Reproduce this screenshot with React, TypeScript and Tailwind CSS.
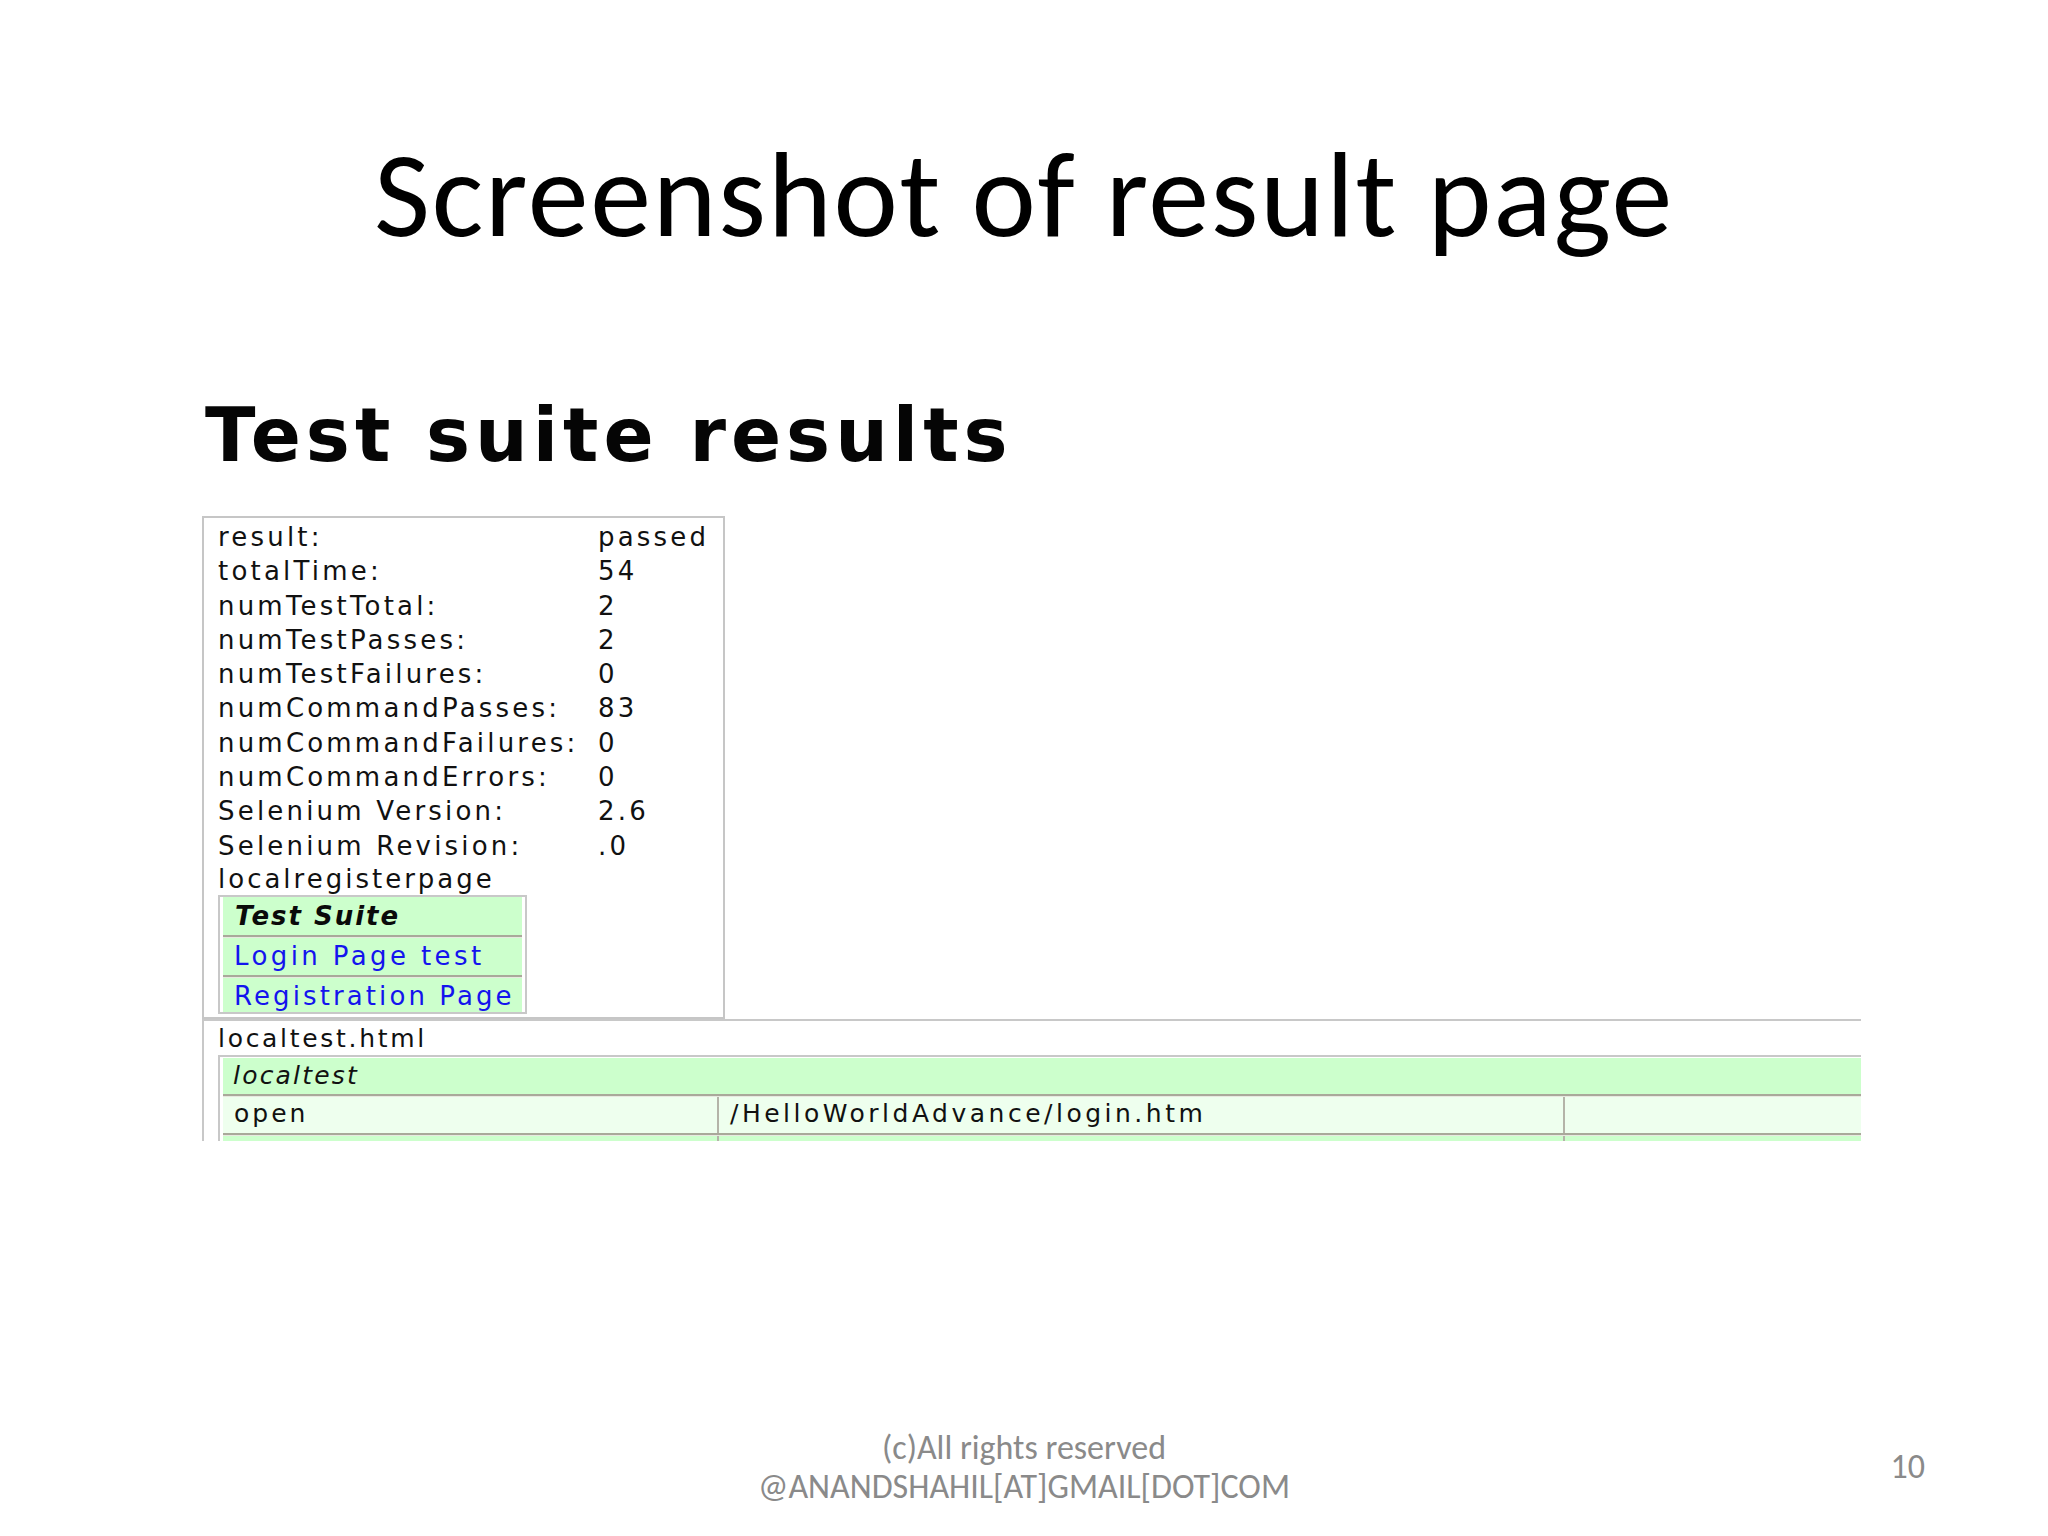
import React from "react";

const rows: [string, string][] = [
  ["result:", "passed"],
  ["totalTime:", "54"],
  ["numTestTotal:", "2"],
  ["numTestPasses:", "2"],
  ["numTestFailures:", "0"],
  ["numCommandPasses:", "83"],
  ["numCommandFailures:", "0"],
  ["numCommandErrors:", "0"],
  ["Selenium Version:", "2.6"],
  ["Selenium Revision:", ".0"],
];

function Sep() {
  return (
    <div className="flex flex-col">
      <div className="h-[2px] bg-[#a9a99a]" />
      <div className="h-[1px] bg-[#e8e8e0]" />
    </div>
  );
}

export default function App() {
  return (
    <div className="w-[2048px] h-[1536px] bg-white overflow-hidden flex flex-col text-black">
      <h1 className="mt-[120px] text-center text-[122px] leading-[150px] font-['Carlito','Lato',sans-serif] font-normal tracking-[1.7px]">
        Screenshot of result page
      </h1>

      <div className="mt-[128px] ml-[205px] text-[74px] leading-[74px] font-['DejaVu_Sans',sans-serif] font-bold tracking-[5px] text-[#050505]">
        Test suite results
      </div>

      <div className="ml-[202px] mt-[44px] w-[523px] border-2 border-[#c6c6c6] pt-[2px] pb-[3px] font-['DejaVu_Sans',sans-serif] text-[26px] tracking-[3.2px] text-[#111111]">
        <div className="grid grid-cols-[380px_1fr] pl-[14px]">
          {rows.map(([k, v]) => (
            <React.Fragment key={k}>
              <div className="leading-[34.3px] whitespace-nowrap">{k}</div>
              <div className="leading-[34.3px] whitespace-nowrap">{v}</div>
            </React.Fragment>
          ))}
        </div>
        <div className="pl-[14px] leading-[32px] tracking-[3px]">localregisterpage</div>
        <div className="ml-[14px] w-[309px] border-2 border-[#c8c8c8] px-[3px] flex flex-col">
          <div className="h-[38px] leading-[38px] bg-[#ccffcc] pl-[12px] font-bold italic tracking-[2px] text-[#0a0a0a]">
            Test Suite
          </div>
          <Sep />
          <div className="h-[37px] leading-[37px] bg-[#ccffcc] pl-[11px] tracking-[3.4px] text-[#1414ee]">
            Login Page test
          </div>
          <Sep />
          <div className="h-[34px] leading-[36px] bg-[#ccffcc] pl-[11px] tracking-[3.1px] text-[#1414ee]">
            Registration Page
          </div>
        </div>
      </div>

      <div className="ml-[202px] w-[1659px] h-[122px] border-l-2 border-t-2 border-[#c8c8c8] overflow-hidden font-['DejaVu_Sans',sans-serif] text-[25px] tracking-[3px] text-[#111111]">
        <div className="pl-[14px] h-[34px] leading-[35px] whitespace-nowrap tracking-[2.7px]">localtest.html</div>
        <div className="ml-[14px] border-l-2 border-t-2 border-[#c8c8c8] pl-[3px] pt-[1px] flex flex-col">
          <div className="h-[36px] leading-[36px] bg-[#ccffcc] pl-[10px] italic tracking-[2.2px]">localtest</div>
          <Sep />
          <div className="h-[36px] bg-[#eeffee] grid grid-cols-[494px_846px_1fr] leading-[34px]">
            <div className="pl-[11px] whitespace-nowrap">open</div>
            <div className="border-l-2 border-[#b4b4a8] pl-[11px] whitespace-nowrap tracking-[3.5px]">/HelloWorldAdvance/login.htm</div>
            <div className="border-l-2 border-[#b4b4a8]" />
          </div>
          <Sep />
          <div className="h-[30px] bg-[#ccffcc] grid grid-cols-[494px_846px_1fr]">
            <div />
            <div className="border-l-2 border-[#b4b4a8]" />
            <div className="border-l-2 border-[#b4b4a8]" />
          </div>
        </div>
      </div>

      <div className="mt-auto pb-[30px] grid grid-cols-[1fr_auto_1fr] items-center font-['Carlito','Lato',sans-serif] text-[#8a8a8a]">
        <div />
        <div className="text-center text-[34px] leading-[39px]">
          <div>(c)All rights reserved</div>
          <div>@ANANDSHAHIL[AT]GMAIL[DOT]COM</div>
        </div>
        <div className="justify-self-end pr-[123px] text-[34px] leading-[38px]">10</div>
      </div>
    </div>
  );
}
